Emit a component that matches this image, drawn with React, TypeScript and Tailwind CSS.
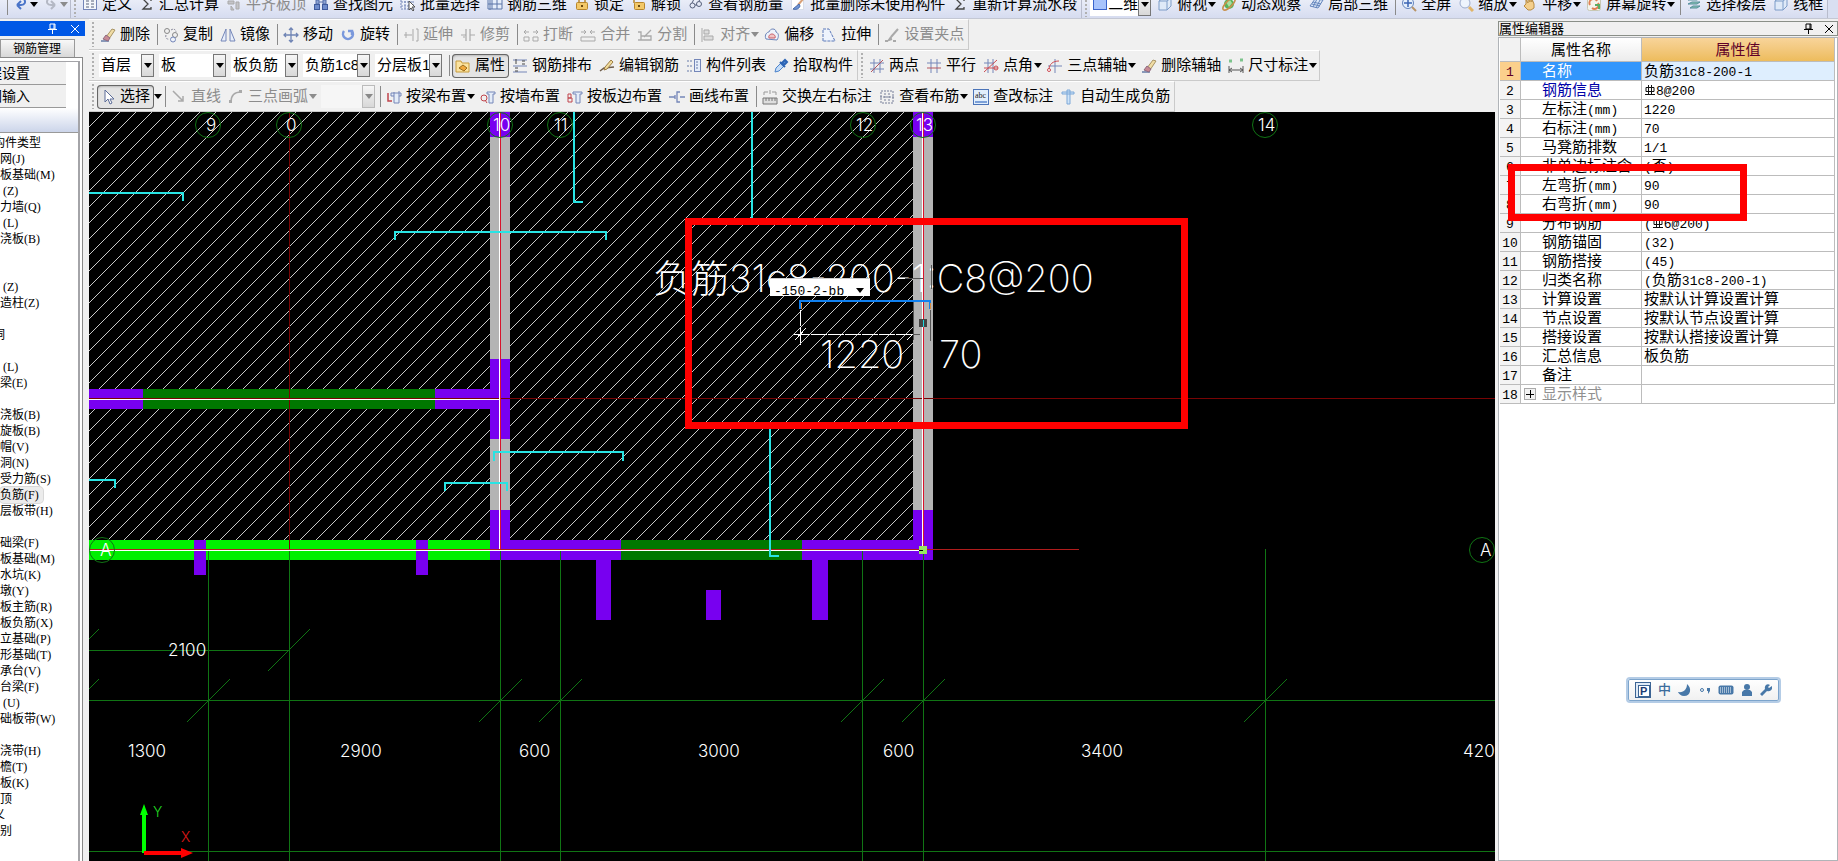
import type { ReactNode } from 'react';
import clsx from 'clsx';

const steel = '#7486b8';
const grey = '#a9a9a9';

// 16x16 toolbar glyphs
const ICONS: Record<string, ReactNode> = {
  undo: <path d="M4 9h4c4 0 5-3 3-6M4 9l4-4M4 9l4 4" fill="none" stroke="#4a74c8" strokeWidth="2" />,
  redo: <path d="M12 9H8C4 9 3 6 5 3M12 9L8 5M12 9l-4 4" fill="none" stroke="#b4b8c4" strokeWidth="2" />,
  define: <><rect x="1.500" y="1.500" width="13" height="12" fill="#f4f7fb" stroke={steel} /><path d="M4 5h3M9 5h3M4 8h3M9 8h3M4 11h3M9 11h3" stroke="#59627c" /></>,
  sigma: <path d="M12 5V3H4l5 5-5 5h8v-2" fill="none" stroke="#444" strokeWidth="1.300" />,
  flush: <path d="M2 5h6v3H2zM8 3h6M10 6h3v7h-3zM5 10l3 4H5z" fill="#c4c4c8" stroke={grey} />,
  find: <><path d="M3 4h3v4H3zM10 4h3v4h-3zM6 6h4" fill="#8da4d4" stroke="#546da8" /><rect x="1.500" y="8.500" width="5" height="5" fill="#6f8ccc" stroke="#3f5a9c" /><rect x="9.500" y="8.500" width="5" height="5" fill="#6f8ccc" stroke="#3f5a9c" /></>,
  batch: <><path d="M1 2h12v11H1zM1 6h12M1 10h12M5 2v11M9 2v11" fill="#eef2fa" stroke={steel} strokeDasharray="2 1" /><path d="M9 5v9l2-2 2 3 1-1-2-3h3z" fill="#fff" stroke="#555" /></>,
  grid3d: <path d="M1 3h14v10H1zM1 8h14M5 3v10M10 3v10M3 1v13" fill="#e6eefa" stroke="#5a74a8" />,
  lock: <><path d="M5 7V4a3 3 0 0 1 6 0v3" fill="none" stroke="#b8862c" strokeWidth="1.500" /><rect x="2.500" y="6.500" width="11" height="7" rx="1" fill="#f3c868" stroke="#b8862c" /><path d="M8 9v2" stroke="#6b4a10" strokeWidth="2" /></>,
  unlock: <><path d="M3 7V4a3 3 0 0 1 5-2" fill="none" stroke="#b8862c" strokeWidth="1.500" /><rect x="3.500" y="6.500" width="10" height="7" rx="1" fill="#f3c868" stroke="#b8862c" /><path d="M8 9v2" stroke="#6b4a10" strokeWidth="2" /></>,
  glasses: <><circle cx="4.500" cy="9.500" r="2.500" fill="none" stroke="#555f7a" /><circle cx="11" cy="8" r="2.500" fill="none" stroke="#555f7a" /><path d="M7 9h2M4 7l2-4M11 5l2-3" stroke="#555f7a" fill="none" /></>,
  erase: <><path d="M1 14h8" stroke="#8898b8" strokeWidth="2" /><path d="M6 10l6-8 3 1-6 9z" fill="#f0dca4" stroke="#a89464" /><path d="M3 12l3-4 4 3-2 3z" fill="#c88a94" stroke="#8e6a80" /></>,
  brush: <><rect x="1.500" y="1.500" width="12" height="12" fill="#fff" stroke="#d8dde8" /><path d="M14 2l-6 7" stroke="#d8a078" strokeWidth="2" /><path d="M9 8l-6 5c3 1 6 0 7-3z" fill="#6f94d4" stroke="#4668a8" /></>,
  solid: <rect x="1.500" y="2.500" width="13" height="11" fill="#a8c4fc" stroke="#3a64cc" />,
  cube: <path d="M2 5l4-3h8v8l-4 4H2zM2 5h8v9M10 5l4-3" fill="#dfeaf8" stroke="#7c9cc8" />,
  orbit: <><circle cx="8" cy="8" r="5" fill="#58b45c" /><path d="M5 6l4-2 2 3-3 4z" fill="#a8e0a0" /><ellipse cx="8" cy="8" rx="8" ry="3" fill="none" stroke="#c8904c" strokeWidth="1.500" transform="rotate(-45 8 8)" /></>,
  local3d: <path d="M2 10l5-7 8 1-5 8zM5 6l8 2M4 8l8 2M9 3l-4 8M12 4l-4 8" fill="#dce8f8" stroke="#6484bc" />,
  full: <><circle cx="7" cy="7" r="5.500" fill="#e6f0fc" stroke="#6484bc" /><path d="M7 3v8M3 7h8" stroke="#3c64b4" strokeWidth="1.500" /><path d="M11 11l4 4" stroke="#b89468" strokeWidth="2" /></>,
  zoom: <><circle cx="7" cy="7" r="5" fill="#eef4fc" stroke="#9caccc" /><path d="M11 11l4 4" stroke="#e0b468" strokeWidth="3" /></>,
  pan: <path d="M4 8V4l2 3V2l2 4V2l2 4V3l2 5v4l-3 2H6l-4-4z" fill="#f4cf8c" stroke="#b88c44" />,
  rotview: <><rect x="1.500" y="1.500" width="13" height="13" rx="2" fill="#f4f4ec" stroke="#c8c8b4" /><path d="M4 9a4 4 0 0 1 7-4M12 7a4 4 0 0 1-6 5" fill="none" stroke="#e08054" strokeWidth="2" /><path d="M9 9h4v4" fill="none" stroke="#5cac64" strokeWidth="2" /></>,
  floors: <path d="M2 4l4-2h8l-3 2zM2 8l4-2h8l-3 2zM4 12l3-2h7l-3 2z" fill="#8cc8b0" stroke="#548c9c" />,
  copy: <><circle cx="4" cy="4" r="2.500" fill="none" stroke="#888" /><circle cx="12" cy="8" r="2.500" fill="none" stroke="#888" /><circle cx="10" cy="12.500" r="2.500" fill="#eef2fa" stroke={steel} /><path d="M8 3c3-2 5 0 5 2M3 8c-1 2 1 5 3 4" fill="none" stroke="#889" strokeDasharray="2 1" /></>,
  mirror: <path d="M6 2v12H1zM10 2v12h5z" fill="#e8eefa" stroke={steel} />,
  move: <path d="M8 1v14M1 8h14M6 3l2-2 2 2M6 13l2 2 2-2M3 6L1 8l2 2M13 6l2 2-2 2" fill="none" stroke="#6f84b4" strokeWidth="1.300" />,
  rotate: <path d="M4 4a5 5 0 1 0 8 0M12 8V4H8" fill="none" stroke="#7a98dc" strokeWidth="2.500" />,
  extend: <path d="M1 8h8M10 2v12M13 2h2v12h-2M3 5v6" fill="none" stroke={grey} />,
  trim: <path d="M1 8h5M10 8h5M6 2v12M10 2v12M3 10h2" fill="none" stroke={grey} strokeWidth="1.200" />,
  breakAt: <path d="M1 5h5M10 5h5M3 3L1 5l2 2M13 3l2 2-2 2M1 10h5v4H1zM10 10h5v4h-5z" fill="none" stroke={grey} />,
  merge: <path d="M1 5h5M10 5h5M4 3l2 2-2 2M12 3l-2 2 2 2M1 10h14v4H1z" fill="none" stroke={grey} />,
  split: <path d="M1 5h3v8H1M4 9h10v4H4M14 3l-7 7" fill="none" stroke={grey} strokeWidth="1.300" />,
  align: <path d="M2 1v14M4 3h5v4H4zM4 9h9v4H4z" fill="#ddd" stroke={grey} />,
  offset: <><path d="M2 12c-2-4 1-7 3-7 1-4 7-4 7 0 3 1 3 5 1 8z" fill="#eef2fa" stroke="#6c84b8" /><path d="M5 11c-1-2 1-4 3-4s4 2 3 4z" fill="#f0c4c4" stroke="#c85a64" /></>,
  stretch: <path d="M2 14V2h6l6 12z" fill="#eef3fc" stroke="#5a78b8" strokeDasharray="3 1" />,
  grips: <><path d="M14 2l-7 8M7 10l-2 3 3-1" stroke={grey} strokeWidth="2" fill="none" /><path d="M1 14h3M9 14h3" stroke={grey} strokeWidth="2" /></>,
  props: <><path d="M1 3h5l1 2h7v9H1z" fill="#fbe3a0" stroke="#c89c3c" /><path d="M4 10l4-3 4 3-3 3z" fill="#f0a83c" stroke="#9c6c1c" /></>,
  arrange: <><path d="M1 2h14M1 8h14M1 14h14" stroke={steel} /><path d="M4 1v5M3 10h3M3 13h3M10 3h3M10 6h3" stroke="#444" /></>,
  editBar: <><path d="M1 13l4-3 10-1" stroke="#6c5c4c" strokeWidth="1.500" fill="none" /><path d="M12 2l2 2-6 7-3 1 1-3z" fill="#f0dc9c" stroke="#9c7c44" /></>,
  list: <><rect x="8.500" y="1.500" width="6" height="12" fill="#e6eefa" stroke={steel} /><path d="M1 3h5M1 8h5M1 13h5M10 4h3M10 7h3M10 10h3" stroke="#667ba8" strokeDasharray="2 1" /></>,
  pick: <><path d="M2 14l1-4 5-5 3 3-5 5z" fill="#c4dcf8" stroke="#4c84cc" /><path d="M7 4l5 5M9 5l3-3 2 2-3 3z" stroke="#2c64b4" strokeWidth="2" fill="#5c94dc" /></>,
  twoPoint: <><path d="M5 1v14M11 1v14M1 11h14M1 5h14" stroke={steel} /><path d="M2 14L14 2" stroke="#b4565e" /></>,
  parallel: <><path d="M5 1v14M11 1v14M1 5h14" stroke={steel} /><path d="M1 10h14" stroke="#b4565e" /></>,
  angle: <><path d="M5 1v14M10 1v14M1 5h10" stroke={steel} /><path d="M1 14L14 2M1 10h14" stroke="#cc4c54" /><circle cx="13" cy="10" r="2" fill="none" stroke="#cc4c54" /></>,
  threePoint: <><path d="M8 1v14M1 8h14" stroke={steel} /><path d="M2 12c0-6 4-9 10-9" fill="none" stroke="#cc4c54" /><circle cx="2" cy="12" r="1.500" fill="#fff" stroke="#cc4c54" /></>,
  dimension: <><path d="M1 8v7M15 8v7M1 12h14M4 10l-3 2 3 2M12 10l3 2-3 2" fill="none" stroke="#555" /><path d="M1 3h3M12 2h3" stroke="#7cc48c" strokeWidth="3" /></>,
  pointer: <path d="M5 1v12l3-3 2 5 2-1-2-4h4z" fill="#fff" stroke="#5c6c98" />,
  line: <path d="M2 2l10 10M12 7v5H7" fill="none" stroke={grey} strokeWidth="1.500" />,
  arc: <><path d="M3 13C3 7 6 3 13 3" fill="none" stroke={grey} strokeWidth="1.500" /><rect x="1" y="11" width="3" height="3" fill={grey} /><rect x="11" y="1" width="3" height="3" fill={grey} /></>,
  beam: <><path d="M2 4v8h4" fill="none" stroke="#c0444c" strokeWidth="1.500" /><path d="M5 4h10v3h-2v7H8V7H5zM8 3v4M13 2v5" fill="#e4ecf8" stroke={steel} /></>,
  wall: <><circle cx="4" cy="9" r="3" fill="none" stroke="#c0444c" /><path d="M5 11l2 3" stroke="#c0444c" /><path d="M7 3h8v2h-2v9H9V5H7z" fill="#e4ecf8" stroke={steel} /></>,
  slab: <><path d="M1 5v8h4V9H1h3V5z" fill="none" stroke="#c0444c" /><path d="M6 3h9v2h-2v9H9V5H6z" fill="#e4ecf8" stroke={steel} /></>,
  drawLine: <path d="M0 8h6M11 8h5M6 6v4M11 3H8v10h3" fill="none" stroke={steel} strokeWidth="1.300" />,
  swap: <><path d="M1 9h14v6H1zM4 9v3M7 9v3M10 9v3M13 9v3" fill="#ddd" stroke="#777" /><path d="M2 6V3h4M10 3h4v3M8 1v4" fill="none" stroke="#999" /></>,
  viewBar: <path d="M2 2h12v12H2zM1 8h14M6 4v8M10 4v8" fill="none" stroke="#777f98" strokeDasharray="2 1" />,
  abc: <><rect x=".5" y=".5" width="15" height="15" fill="#e2effc" stroke="#4c74b8" /><path d="M2 13h12" stroke="#7ca0d8" strokeWidth="2" /><text x="2" y="9" fontSize="8" fontFamily="Liberation Serif" fill="#222">abc</text></>,
  auto: <path d="M2 3h12v2H2zM7 1h3v14H7z" fill="#cfe4f8" stroke="#7ca8d8" />,
};

function Icon({ name }: { name: string }) {
  return <svg viewBox="0 0 16 16" className="w-4 h-4 shrink-0" aria-hidden="true">{ICONS[name]}</svg>;
}

function Caret({ className }: { className?: string }) {
  return (
    <svg viewBox="0 0 8 5" className={clsx('w-2 h-[5px] shrink-0', className)} aria-hidden="true">
      <path d="M0 0h8L4 5z" fill="currentColor" />
    </svg>
  );
}

type ToolProps = { icon: string; label?: string; caret?: boolean; off?: boolean; pressed?: boolean };

function Tool({ icon, label, caret, off, pressed }: ToolProps) {
  return (
    <button
      type="button"
      disabled={off}
      aria-label={label ? undefined : icon}
      className={clsx('flex items-center shrink-0 whitespace-nowrap', off ? 'text-[#8c8c8c]' : 'text-black')}
    >
      <span
        className={clsx(
          'flex items-center gap-1 h-6 pl-[3px]',
          caret && !pressed ? 'pr-px' : 'pr-1',
          pressed && 'rounded-sm bg-[#e4e4e4] shadow-[inset_0_0_0_1px_#666,inset_1px_2px_2px_#bbb]',
        )}
      >
        <Icon name={icon} />
        {label}
      </span>
      {caret && <Caret className={pressed ? '' : 'mr-[2px]'} />}
    </button>
  );
}

function Sep() {
  return <span className="w-[6px] h-[21px] shrink-0 flex justify-center"><span className="w-px bg-[#8a8a8a]" /></span>;
}

function Grip() {
  return (
    <span className="w-2 h-[25px] shrink-0 flex justify-center">
      <span className="w-[2px] bg-[repeating-linear-gradient(#b0b0b0_0_2px,transparent_2px_4px)]" />
    </span>
  );
}

function Combo({ label, value, className, off, icon }: { label: string; value: string; className: string; off?: boolean; icon?: string }) {
  return (
    <span className={clsx('relative flex items-center h-[23px] shrink-0', off ? 'bg-[#f6f6f6]' : 'bg-white', className)}>
      {icon && <span className="pl-[2px]"><Icon name={icon} /></span>}
      <select
        aria-label={label}
        disabled={off}
        className={clsx('appearance-none bg-transparent flex-1 min-w-0 h-full mr-3 outline-none text-clip', !icon && 'pl-[2px]')}
      >
        <option>{value}</option>
      </select>
      <span
        className={clsx(
          'absolute right-0 inset-y-0 w-[13px] border bg-linear-to-b from-[#f6f6f6] to-[#d8d8d8] flex items-center justify-center pointer-events-none',
          off ? 'border-[#bbb] text-[#888]' : 'border-[#777] text-black',
        )}
      >
        <Caret />
      </span>
    </span>
  );
}

function Bar({ children }: { children: ReactNode }) {
  return (
    <div className="flex items-center h-[31px] shrink-0 border-t border-t-white border-b border-r border-b-[#cacaca] border-r-[#cacaca] bg-[#f0f0f0]">
      {children}
    </div>
  );
}

function TopBar() {
  return (
    <header className="h-[19px] shrink-0 overflow-hidden flex items-end bg-[#d9dff1] border-b border-[#c4c8d4]">
      <div className="h-7 flex items-center shrink-0 bg-linear-to-b from-[#f4f6fc] to-[#d6dcf0]">
        <div className="flex items-center w-[71px] h-full shrink-0 pl-1 border-r border-[#b8bccc]">
          <Sep />
          <Tool icon="undo" caret />
          <Tool icon="redo" caret off />
        </div>
        <Grip />
        <Tool icon="define" label="定义" />
        <Tool icon="sigma" label="汇总计算" />
        <Tool icon="flush" label="平齐板顶" off />
        <Tool icon="find" label="查找图元" />
        <Tool icon="batch" label="批量选择" />
        <Tool icon="grid3d" label="钢筋三维" />
        <Tool icon="lock" label="锁定" />
        <Tool icon="unlock" label="解锁" />
        <Tool icon="glasses" label="查看钢筋量" />
        <Tool icon="brush" label="批量删除未使用构件" />
        <Tool icon="sigma" label="重新计算流水段" />
        <span className="w-px h-full bg-[#b8bccc]" />
        <Grip />
        <Combo label="视图" value="二维" icon="solid" className="w-[61px] mr-[3px]" />
        <Tool icon="cube" label="俯视" caret />
        <Tool icon="orbit" label="动态观察" />
        <Tool icon="local3d" label="局部三维" />
        <Sep />
        <Tool icon="full" label="全屏" />
        <Tool icon="zoom" label="缩放" caret />
        <Tool icon="pan" label="平移" caret />
        <Tool icon="rotview" label="屏幕旋转" caret />
        <Sep />
        <Tool icon="floors" label="选择楼层" />
        <Tool icon="cube" label="线框" />
        <span className="w-px h-full bg-[#b8bccc]" />
      </div>
    </header>
  );
}

function ToolRows() {
  return (
    <div className="shrink-0 overflow-hidden">
      <div className="flex">
        <Bar>
          <Grip />
          <Tool icon="erase" label="删除" />
          <Sep />
          <Tool icon="copy" label="复制" />
          <Tool icon="mirror" label="镜像" />
          <Sep />
          <Tool icon="move" label="移动" />
          <Tool icon="rotate" label="旋转" />
          <Sep />
          <Tool icon="extend" label="延伸" off />
          <Tool icon="trim" label="修剪" off />
          <Sep />
          <Tool icon="breakAt" label="打断" off />
          <Tool icon="merge" label="合并" off />
          <Tool icon="split" label="分割" off />
          <Sep />
          <Tool icon="align" label="对齐" caret off />
          <Tool icon="offset" label="偏移" />
          <Tool icon="stretch" label="拉伸" />
          <Sep />
          <Tool icon="grips" label="设置夹点" off />
        </Bar>
      </div>
      <div className="flex">
        <Bar>
          <Grip />
          <div className="flex gap-[5px] ml-[2px] mr-1">
            <Combo label="楼层" value="首层" className="w-[55px]" />
            <Combo label="构件类别" value="板" className="w-[67px]" />
            <Combo label="构件类型" value="板负筋" className="w-[67px]" />
            <Combo label="构件" value="负筋1c8" className="w-[67px]" />
            <Combo label="分层" value="分层板1" className="w-[67px]" />
          </div>
          <Sep />
          <Tool icon="props" label="属性" pressed />
          <Tool icon="arrange" label="钢筋排布" />
          <Tool icon="editBar" label="编辑钢筋" />
          <Tool icon="list" label="构件列表" />
          <Tool icon="pick" label="拾取构件" />
        </Bar>
        <Bar>
          <Grip />
          <Tool icon="twoPoint" label="两点" />
          <Tool icon="parallel" label="平行" />
          <Tool icon="angle" label="点角" caret />
          <Tool icon="threePoint" label="三点辅轴" caret />
          <Tool icon="erase" label="删除辅轴" />
          <Tool icon="dimension" label="尺寸标注" caret />
        </Bar>
      </div>
      <div className="flex">
        <Bar>
          <Grip />
          <Tool icon="pointer" label="选择" caret pressed />
          <Sep />
          <Tool icon="line" label="直线" off />
          <Tool icon="arc" label="三点画弧" caret off />
          <Combo label="弧" value="" className="w-[54px] mx-[2px]" off />
          <Sep />
          <Tool icon="beam" label="按梁布置" caret />
          <Tool icon="wall" label="按墙布置" />
          <Tool icon="slab" label="按板边布置" />
          <Tool icon="drawLine" label="画线布置" />
          <Sep />
          <Tool icon="swap" label="交换左右标注" />
          <Tool icon="viewBar" label="查看布筋" caret />
          <Tool icon="abc" label="查改标注" />
          <Tool icon="auto" label="自动生成负筋" />
        </Bar>
      </div>
    </div>
  );
}

function Pin() {
  return (
    <svg viewBox="0 0 9 11" className="w-[9px] h-[11px]" aria-hidden="true">
      <path d="M2 1h5v5H2zM6 1v5M0 6.500h9M4.500 7v4" fill="none" stroke="currentColor" />
    </svg>
  );
}

function Close() {
  return (
    <svg viewBox="0 0 8 8" className="w-2 h-2" aria-hidden="true">
      <path d="M0 0l8 8M8 0L0 8" stroke="currentColor" />
    </svg>
  );
}

// '<' marks a label that is cut by the window's left edge
const TREE = [
  '<构件类型', '网(J)', '板基础(M)', ' (Z)', '力墙(Q)', ' (L)', '浇板(B)', '', '', ' (Z)', '造柱(Z)', '', '<洞', '', ' (L)',
  '梁(E)', '', '浇板(B)', '旋板(B)', '帽(V)', '洞(N)', '受力筋(S)', '负筋(F)', '层板带(H)', '', '础梁(F)', '板基础(M)',
  '水坑(K)', '墩(Y)', '板主筋(R)', '板负筋(X)', '立基础(P)', '形基础(T)', '承台(V)', '台梁(F)', ' (U)', '础板带(W)', '',
  '浇带(H)', '檐(T)', '板(K)', '顶', '<义', '别',
];

function NavPanel() {
  return (
    <aside className="w-[85px] shrink-0 flex flex-col pt-[2px] overflow-hidden">
      <div className="h-[15px] shrink-0 bg-[#0058e6] text-white flex items-center justify-end gap-[14px] pr-[6px]">
        <Pin />
        <Close />
      </div>
      <div className="h-[21px] shrink-0 flex items-end text-xs">
        <button type="button" className="w-[75px] h-[18px] pl-3 text-left border border-[#999] border-b-0 bg-linear-to-b from-[#f8f8f8] to-[#d8d8d8] leading-4">
          钢筋管理
        </button>
      </div>
      <div className="flex-1 min-h-0 w-[83px] border-t border-r border-[#888] bg-white pt-[3px] pr-[2px]">
        <div className="h-full border-r-2 border-t border-[#a4a4a8] overflow-hidden">
          <button type="button" className="-ml-4 pl-1 w-full h-[22px] text-left text-sm leading-5 whitespace-nowrap border-b border-[#999] box-content bg-[#f0f0f0]">
            程设置
          </button>
          <button type="button" className="-ml-4 pl-1 w-full h-[22px] text-left text-sm leading-5 whitespace-nowrap border-b border-[#999] box-content bg-[#f0f0f0]">
            图输入
          </button>
          <div className="h-[25px] border-b border-[#999] bg-linear-to-b from-white to-[#ccd5ea]" />
          <ul className="pt-[2px] text-xs font-['Liberation_Serif','Noto_Sans_CJK_SC',serif]">
            {TREE.map((item, i) => (
              <li key={i} className="h-4 leading-4 whitespace-pre">
                <span
                  className={clsx(
                    item[0] === '<' && '-ml-[7px]',
                    item === '负筋(F)' && 'inline-block h-4 pr-1 rounded-sm bg-[#ececec] shadow-[0_0_0_1px_#d8d8d8]',
                  )}
                >
                  {item.replace('<', '')}
                </span>
              </li>
            ))}
          </ul>
        </div>
      </div>
    </aside>
  );
}

const GREEN = '#107414';
const PURPLE = '#7800f0';

const AXES: [string, number, number][] = [
  ['9', 208, 206], ['0', 289, 286], ['10', 500, 493], ['11', 560, 554], ['12', 863, 856], ['13', 923, 916], ['14', 1265, 1258],
];

const DIMS: [string, number, number][] = [
  ['2100', 168, 656], ['1300', 128, 757], ['2900', 340, 757], ['600', 519, 757], ['3000', 698, 757], ['600', 883, 757],
  ['3400', 1081, 757], ['4200', 1463, 757],
];

// x, y, width, height, fill
const BLOCKS: [number, number, number, number, string][] = [
  [89, 389, 54, 20, PURPLE], [143, 389, 292, 20, '#007800'], [435, 389, 55, 20, PURPLE],
  [89, 540, 401, 20, '#00f000'], [194, 540, 12, 35, PURPLE], [416, 540, 12, 35, PURPLE],
  [490, 540, 131, 20, PURPLE], [621, 540, 181, 20, '#007800'], [802, 540, 131, 20, PURPLE],
  [490, 112, 20, 25, PURPLE], [490, 137, 20, 222, '#b4b4b4'], [490, 359, 20, 80, PURPLE],
  [490, 439, 20, 71, '#b4b4b4'], [490, 510, 20, 30, PURPLE],
  [913, 112, 20, 25, PURPLE], [913, 137, 20, 373, '#b4b4b4'], [913, 510, 20, 30, PURPLE],
  [596, 560, 15, 60, PURPLE], [706, 590, 15, 30, PURPLE], [812, 560, 16, 60, PURPLE],
];

function Drawing() {
  return (
    <svg className="absolute inset-0 w-full h-full" role="img" aria-label="板负筋平面图">
      <defs>
        <pattern id="hatch" width="16" height="16" patternUnits="userSpaceOnUse">
          <path d="M-1 9L9-1M7 17L17 7" stroke="#c8c8c8" strokeWidth="1" shapeRendering="crispEdges" />
        </pattern>
      </defs>
      <g transform="translate(-89 -112)">
        <rect x="89" y="112" width="824" height="428" fill="url(#hatch)" />
        <g shapeRendering="crispEdges">
          {BLOCKS.map(([x, y, w, h, fill]) => (
            <rect key={`${x}-${y}`} x={x} y={y} width={w} height={h} fill={fill} />
          ))}
          <g stroke="#780404" fill="none">
            <path d="M289.500 112v437M89 398.500h1800" />
          </g>
          <g stroke={GREEN} fill="none">
            <path d="M208.500 550v600M289.500 550v600M500.500 550v600M560.500 550v600M862.500 550v600M923.500 550v600M1265.500 549v600" />
            <path d="M89 650.500h200M89 700.500h1800M89 851.500h1800" />
          </g>
          <path d="M89 399.500h410M499.500 112v437M89 550.500h830M922.500 112v436" stroke="#fff" fill="none" />
          <path d="M500.500 112v437M923.500 112v436" stroke="#d8142c" fill="none" />
          <path d="M89 549.500h990" stroke="#b01c1c" fill="none" />
          <rect x="919" y="546" width="8" height="8" fill="#98e860" />
          <path d="M919 550.500h4" stroke="#000" />
          <g stroke="#28e4e4" strokeWidth="2" fill="none">
            <path d="M89 193h94v8M395 240v-8h211v8M574 112v90h9M752 112v108M770 429v127h9" />
            <path d="M494 461v-9h129v9M445 491v-8h62v8M89 480h26v8" />
          </g>
        </g>
        <path
          d="M187 722l43-43M268 671l42-42M479 722l43-43M539 722l43-43M841 722l43-43M902 722l43-43M1244 722l43-43M89 639l10-10M89 689l10-10"
          stroke={GREEN}
          fill="none"
        />
        <g className="text-[17px] font-light" fill="#fff">
          {AXES.map(([label, cx, x]) => (
            <g key={label}>
              <circle cx={cx} cy="125" r="12.500" fill="none" stroke={GREEN} />
              <text x={x} y="131">{label}</text>
            </g>
          ))}
          <circle cx="102" cy="550" r="12.500" fill="none" stroke={GREEN} />
          <text x="100" y="556">A</text>
          <circle cx="1482" cy="550" r="12.500" fill="none" stroke={GREEN} />
          <text x="1480" y="556">A</text>
          {DIMS.map(([label, x, y]) => (
            <text key={label + x} x={x} y={y}>{label}</text>
          ))}
        </g>
        <g className="text-[38px] font-extralight" fill="#fff">
          <text x="653" y="292">负筋31c8-200-1:C8@200</text>
          <text x="820" y="368">1220</text>
          <text x="939" y="368">70</text>
        </g>
        <g fill="none" shapeRendering="crispEdges">
          <path d="M800 309v-8h130v8" stroke="#1080f0" strokeWidth="2" />
          <path d="M801.500 303v6M930.500 303v6" stroke="#d88838" />
          <path d="M800.500 310v35M794 334.500h119" stroke="#fff" strokeDasharray="16 1" />
          <path d="M795 340l11-12M907 340l6-6" stroke="#fff" />
          <path d="M913.500 302v38M930.500 310v31M931.500 265v24M905 278.500h18M913 334.500h7" stroke="#555" />
        </g>
        <rect x="919" y="319" width="8" height="8" fill="#444" />
        <path d="M923.500 320v7" stroke="#20d8e0" />
        <rect x="688.500" y="221.500" width="496" height="204" fill="none" stroke="#f00" strokeWidth="7" />
        <path d="M144 853v-39" stroke="#0f0" strokeWidth="4" />
        <path d="M140 815l4-11 4 11z" fill="#0f0" />
        <path d="M144 853h38" stroke="#f00" strokeWidth="4" />
        <path d="M181 848l12 5-12 5z" fill="#f00" />
        <g className="text-sm font-light">
          <text x="153" y="817" fill="#20d820">Y</text>
          <text x="181" y="842" fill="#e01818">X</text>
        </g>
      </g>
    </svg>
  );
}

function Canvas() {
  return (
    <main className="relative flex-1 min-h-0 bg-black overflow-hidden font-['Inter','Noto_Sans_CJK_SC',sans-serif]">
      <Drawing />
      <div className="absolute left-[681px] top-[166px] w-[100px] h-[18px] bg-white border-t border-[#ccc] overflow-hidden text-black">
        <select aria-label="标注" className="appearance-none w-full h-6 pl-1 text-[13px] outline-none font-['Liberation_Mono',monospace]">
          <option>-150-2-bb</option>
        </select>
        <Caret className="absolute right-[6px] top-[9px]" />
      </div>
    </main>
  );
}

// grade mark in front of a bar diameter
function BarMark() {
  return (
    <svg viewBox="0 0 12 12" className="inline-block w-3 h-3 align-[-1px]" aria-hidden="true">
      <path d="M2 3.500h8v4H2zM4.500 1v9M7.500 1v9M1 10.500h10" fill="none" stroke="#111" />
    </svg>
  );
}

function Mixed({ text }: { text: string }) {
  return (
    <>
      {text.split(/([ -~]+|Φ)/).map((part, i) => {
        if (part === 'Φ') return <BarMark key={i} />;
        return i % 2 ? <span key={i} className="text-[13px] font-['Liberation_Mono',monospace]">{part}</span> : part;
      })}
    </>
  );
}

const PROPS: [string, string][] = [
  ['名称', '负筋31c8-200-1'],
  ['钢筋信息', 'Φ8@200'],
  ['左标注(mm)', '1220'],
  ['右标注(mm)', '70'],
  ['马凳筋排数', '1/1'],
  ['非单边标注含', '(否)'],
  ['左弯折(mm)', '90'],
  ['右弯折(mm)', '90'],
  ['分布钢筋', '(Φ6@200)'],
  ['钢筋锚固', '(32)'],
  ['钢筋搭接', '(45)'],
  ['归类名称', '(负筋31c8-200-1)'],
  ['计算设置', '按默认计算设置计算'],
  ['节点设置', '按默认节点设置计算'],
  ['搭接设置', '按默认搭接设置计算'],
  ['汇总信息', '板负筋'],
  ['备注', ''],
  ['显示样式', ''],
];

function PropertyPanel() {
  return (
    <aside className="relative w-[340px] shrink-0 flex flex-col pt-[2px]">
      <div className="h-[15px] shrink-0 flex items-center border border-[#8a8f88] pr-1">
        <h2 className="flex-1 text-[13px] leading-3">属性编辑器</h2>
        <span className="flex items-center gap-3"><Pin /><Close /></span>
      </div>
      <div className="flex-1 min-h-0 mt-px border border-[#b0b4b8] bg-white pl-px pr-[2px] overflow-hidden">
        <table className="w-full table-fixed border-separate border-spacing-0 text-[15px] leading-[18px]">
          <colgroup>
            <col className="w-[21px]" />
            <col className="w-[121px]" />
            <col />
          </colgroup>
          <thead>
            <tr className="[&>th]:h-6 [&>th]:p-0 [&>th]:font-normal [&>th]:border-b [&>th]:border-r [&>th]:border-[#bcbcbc]">
              <th className="bg-[#f2f2f2]" aria-label="序号" />
              <th className="bg-linear-to-b from-white to-[#ececec]">属性名称</th>
              <th className="bg-linear-to-b from-[#f8d49a] to-[#edbc5c] text-[#600028]">属性值</th>
            </tr>
          </thead>
          <tbody>
            {PROPS.map(([name, value], i) => (
              <tr key={name} className="[&>td]:h-[19px] [&>td]:p-0 [&>td]:border-b [&>td]:border-r [&>td]:border-[#bcbcbc] [&>td]:align-top whitespace-nowrap">
                <td className={i === 0 ? 'bg-[#fbd08c] text-[#600028]' : 'bg-[#f4f4f4]'}>
                  <div className="h-[18px] text-center"><Mixed text={String(i + 1)} /></div>
                </td>
                <td
                  className={clsx(
                    i === 0 && 'bg-[#3296fc] text-white',
                    i === 1 && 'text-[#0000a8]',
                    i === 17 && 'text-[#909090]',
                  )}
                >
                  <div className="flex h-[18px]">
                    <span className="w-[21px] shrink-0 pl-[3px] pt-[3px]">
                      {i === 17 && (
                        <button type="button" aria-label="展开" className="block w-3 h-3 border border-[#aaa] bg-[#f2f2f2] text-black">
                          <svg viewBox="0 0 10 10" className="w-[10px] h-[10px]"><path d="M1 5.500h8M5.500 1v8" stroke="#000" /></svg>
                        </button>
                      )}
                    </span>
                    <span><Mixed text={name} /></span>
                  </div>
                </td>
                <td className={i === 0 ? 'bg-[#deeefe]' : 'bg-white'}>
                  <div className="pl-[2px] h-[18px]"><Mixed text={value} /></div>
                </td>
              </tr>
            ))}
          </tbody>
        </table>
      </div>
      <div className="absolute left-[10px] top-[145px] w-[239px] h-[57px] border-[7px] border-[#f00] pointer-events-none" />
      <ImeBar />
    </aside>
  );
}

function ImeBar() {
  return (
    <div className="absolute right-[57px] bottom-[158px] h-[26px] w-[155px] flex items-center justify-between px-[7px] rounded-sm border-2 border-[#b4cce6] bg-linear-to-b from-white to-[#f0f0f0] shadow-[inset_0_0_0_1px_#7ca4cc] text-[#3c6c9c]">
      <svg viewBox="0 0 16 16" className="w-4 h-4">
        <rect x=".5" y=".5" width="15" height="15" fill="#dfeaf6" stroke="#3c6494" />
        <rect x="3.500" y="3.500" width="11" height="11" fill="#fff" stroke="#3c6494" />
        <text x="5" y="13" fontSize="11" fontWeight="700" fontFamily="Liberation Sans" fill="#1c3c74">P</text>
      </svg>
      <span className="text-[13px] leading-4 font-medium">中</span>
      <svg viewBox="0 0 14 14" className="w-[14px] h-[14px]"><path d="M9 1c5 4 4 12-3 12-3 0-5-2-6-4 6 1 9-3 9-8z" fill="#4878a8" /></svg>
      <svg viewBox="0 0 12 12" className="w-3 h-3"><circle cx="3" cy="6" r="1.500" fill="none" stroke="#4878a8" /><path d="M8 4h3v3l-2 3 0-3H8z" fill="#4878a8" /></svg>
      <svg viewBox="0 0 16 10" className="w-4 h-[10px]">
        <rect x=".5" y=".5" width="15" height="9" rx="2" fill="#4878a8" />
        <path d="M2 3h12M2 5h12M2 7h12" stroke="#fff" strokeDasharray="1 1" />
      </svg>
      <svg viewBox="0 0 12 12" className="w-3 h-3"><circle cx="6" cy="3" r="3" fill="#4878a8" /><path d="M1 12V8l2-2h6l2 2v4H8V9v3H4V9v3z" fill="#4878a8" /></svg>
      <svg viewBox="0 0 12 12" className="w-3 h-3"><path d="M0 10l5-5c-1-3 2-6 5-4L8 3l1 1 3-2c1 4-2 6-5 5l-5 5z" fill="#4878a8" /></svg>
    </div>
  );
}

export default function App() {
  return (
    <div className="h-screen overflow-hidden flex flex-col bg-[#f0f0f0] text-black text-[15px] font-['Liberation_Sans','Noto_Sans_CJK_SC',sans-serif]">
      <TopBar />
      <div className="flex flex-1 min-h-0">
        <NavPanel />
        <div className="flex-1 min-w-0 flex flex-col ml-1 mr-[3px]">
          <ToolRows />
          <Canvas />
        </div>
        <PropertyPanel />
      </div>
    </div>
  );
}
